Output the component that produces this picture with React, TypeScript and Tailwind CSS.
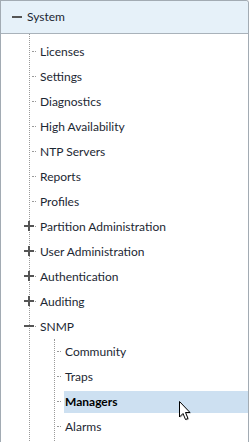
import React from "react";

type Node = {
  label: string;
  state?: "open" | "closed";
  selected?: boolean;
  children?: Node[];
};

const items: Node[] = [
  { label: "Licenses" },
  { label: "Settings" },
  { label: "Diagnostics" },
  { label: "High Availability" },
  { label: "NTP Servers" },
  { label: "Reports" },
  { label: "Profiles" },
  { label: "Partition Administration", state: "closed" },
  { label: "User Administration", state: "closed" },
  { label: "Authentication", state: "closed" },
  { label: "Auditing", state: "closed" },
  {
    label: "SNMP",
    state: "open",
    children: [
      { label: "Community" },
      { label: "Traps" },
      { label: "Managers", selected: true },
      { label: "Alarms" },
    ],
  },
];

function Toggle({ open }: { open: boolean }) {
  return (
    <svg width="10" height="10" viewBox="0 0 10 10" className="absolute left-[-6px] top-[7px]">
      <rect x="0" y="4" width="10" height="2" fill="#555" />
      {!open && <rect x="4" y="0" width="2" height="10" fill="#555" />}
    </svg>
  );
}

function Cursor() {
  return (
    <svg width="14" height="22" viewBox="0 0 14 22" className="absolute left-[114px] top-[9px]">
      <path d="M1.5 1.5 L1.5 17 L5 13.5 L7.5 19.5 L10 18.5 L7.5 12.5 L12 12.5 Z" fill="#000" opacity="0.25" transform="translate(1 1)" />
      <path d="M1.5 1.5 L1.5 17 L5 13.5 L7.5 19.5 L10 18.5 L7.5 12.5 L12 12.5 Z" fill="#fff" stroke="#000" strokeWidth="1" strokeLinejoin="miter" />
    </svg>
  );
}

function SubRow({ node }: { node: Node }) {
  return (
    <div className="relative flex items-center h-[25px]">
      <div className="ml-[2px] w-[4px] border-t border-dotted border-[#9a9a9a]" />
      <div
        className={`ml-[3px] flex items-center h-[22px] pl-[1px] ${
          node.selected ? "flex-1 bg-[#cde0f1] font-bold text-black relative" : "text-[#1c2733]"
        }`}
      >
        {node.label}
        {node.selected && <Cursor />}
      </div>
    </div>
  );
}

export default function App() {
  return (
    <div
      className="w-[249px] h-[442px] overflow-hidden bg-white border-l border-t border-r border-[#a2abb3] rounded-tr-[3px] text-[12px] leading-none"
      style={{ fontFamily: "Lato, 'Liberation Sans', sans-serif" }}
    >
      {/* header */}
      <div className="h-[33px] flex items-center bg-[#e6f1f9] border-b border-[#a9b2ba]">
        <div className="ml-[11px] w-[10px] h-[2px] bg-[#555]" />
        <span className="ml-[5px] text-[#1c2733]">System</span>
      </div>

      {/* tree */}
      <div className="ml-[28px] pt-[5px] min-h-[420px] border-l border-dotted border-[#9a9a9a]">
        {items.map((n) => (
          <div key={n.label}>
            <div className="relative flex items-center h-[25px]">
              {n.state && <Toggle open={n.state === "open"} />}
              <div className="ml-[2px] w-[4px] border-t border-dotted border-[#9a9a9a]" />
              <span className="ml-[4px] text-[#1c2733]">{n.label}</span>
            </div>
            {n.children && (
              <div className="ml-[24px] min-h-[120px] border-l border-dotted border-[#9a9a9a]">
                {n.children.map((c) => (
                  <SubRow key={c.label} node={c} />
                ))}
              </div>
            )}
          </div>
        ))}
      </div>
    </div>
  );
}
